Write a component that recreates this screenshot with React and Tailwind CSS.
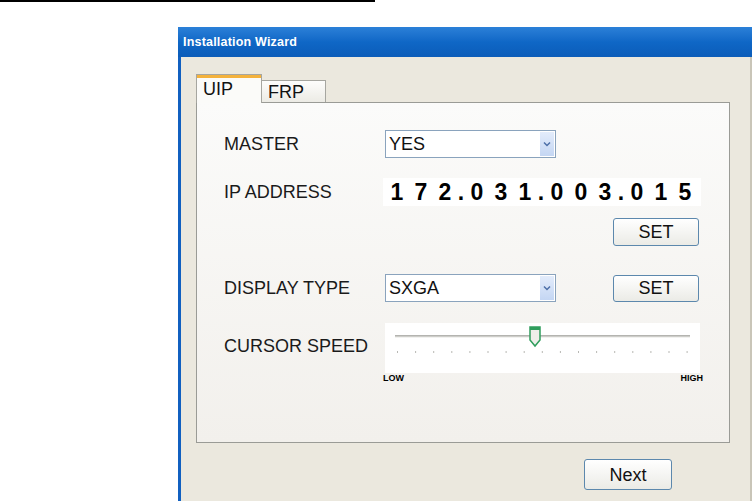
import React from 'react'

// slider tick positions, evenly spread over the track
const ticks = Array.from({ length: 17 }, (_, i) => 12 + i * 18.1)

const ipChars = '172.031.003.015'.split('')

const Dropdown = ({ value }) => {
    return (
        <div className="flex h-[28px] w-[171px] items-stretch border border-[#8aa3bd] bg-white">
            <div className="flex flex-1 items-center pl-[3px] text-[18px] leading-none text-[#111]">{value}</div>
            <div className="m-[1px] flex w-[14px] items-center justify-center bg-gradient-to-b from-[#e3ecfb] to-[#c4d6f3]">
                <svg width="8" height="6" viewBox="0 0 8 6">
                    <path d="M1 1.5 L4 4.5 L7 1.5" fill="none" stroke="#4d6fa8" strokeWidth="1.5" />
                </svg>
            </div>
        </div>
    )
}

const XpButton = ({ label, className }) => {
    return (
        <button
            className={
                'flex items-center justify-center rounded-[3px] border border-[#5c88ad] bg-gradient-to-b from-[#ffffff] to-[#ebebe6] text-[18px] leading-none text-[#111] ' +
                className
            }
        >
            {label}
        </button>
    )
}

const App = () => {
    return (
        <div
            className="relative h-[501px] w-[754px] overflow-hidden bg-white"
            style={{ fontFamily: '"Liberation Sans", Arial, sans-serif' }}
        >
            <div className="h-[2px] w-[375px] bg-black" />

            {/* window */}
            <div className="ml-[178px] mt-[25px] flex h-[474px] w-[574px] flex-col">
                <div className="flex h-[30px] items-center bg-gradient-to-b from-[#2b80d8] via-[#0f67c6] to-[#0b5cb9] pl-[5px]">
                    <span className="text-[12.5px] font-bold tracking-[0.2px] text-white">Installation Wizard</span>
                </div>

                <div className="flex flex-1 flex-col border-l-[3px] border-r-[2px] border-l-[#1160c0] border-r-[#c9c5b8] bg-[#ebe8de] pl-[15px] pt-[17px]">
                    {/* tabs */}
                    <div className="flex h-[28px] items-end">
                        <div className="relative z-10 -mb-px flex h-[29px] w-[66px] flex-col border border-b-0 border-[#a6a6a0] bg-[#fbfbf9]">
                            <div className="h-[3px] bg-[#f4b23c]" />
                            <div className="pl-[6px] pt-[2px] text-[18px] leading-none text-[#111]">UIP</div>
                        </div>
                        <div className="flex h-[22px] w-[64px] items-start border border-b-0 border-l-0 border-[#a6a6a0] bg-gradient-to-b from-[#fdfdfc] to-[#ecebe5] pl-[6px] pt-[2px] text-[18px] leading-none text-[#111]">
                            FRP
                        </div>
                    </div>

                    {/* panel */}
                    <div className="flex h-[341px] w-[534px] flex-col border border-[#9a9b96] bg-gradient-to-b from-[#fbfbfa] to-[#f2f0ec] pl-[27px] pt-[27px] text-[#1a1a1a]">
                        <div className="flex h-[28px] items-center">
                            <div className="w-[161px] text-[18px]">MASTER</div>
                            <Dropdown value="YES" />
                        </div>

                        <div className="mt-[20px] flex h-[28px] items-center">
                            <div className="w-[159px] text-[18px]">IP ADDRESS</div>
                            <div className="flex h-[28px] w-[318px] items-center bg-white pl-[2px]">
                                {ipChars.map((c, i) => (
                                    <span
                                        key={i}
                                        className={
                                            c === '.'
                                                ? 'w-[8px] text-center text-[23px] font-bold leading-none text-black'
                                                : 'w-[24px] text-center text-[23px] font-bold leading-none text-black'
                                        }
                                    >
                                        {c}
                                    </span>
                                ))}
                            </div>
                        </div>

                        <div className="mt-[12px] flex">
                            <XpButton label="SET" className="ml-[389px] h-[28px] w-[86px]" />
                        </div>

                        <div className="mt-[28px] flex h-[28px] items-center">
                            <div className="w-[161px] text-[18px]">DISPLAY TYPE</div>
                            <Dropdown value="SXGA" />
                            <XpButton label="SET" className="ml-[57px] h-[27px] w-[86px]" />
                        </div>

                        <div className="mt-[21px] flex">
                            <div className="w-[161px] pt-[10px] text-[18px]">CURSOR SPEED</div>
                            <div className="flex flex-col">
                                <div className="h-[50px] w-[315px] bg-white">
                                    <svg width="315" height="50" viewBox="0 0 315 50">
                                        <line x1="10" y1="13" x2="305" y2="13" stroke="#b4b4b0" strokeWidth="2" />
                                        <line x1="10" y1="14" x2="305" y2="14" stroke="#e6e6e2" strokeWidth="1" />
                                        {ticks.map((x, i) => (
                                            <rect key={i} x={x} y="28" width="1" height="2" fill="#b8b8b4" />
                                        ))}
                                        <path
                                            d="M145 4 L155 4 L155 17 L150 23 L145 17 Z"
                                            fill="#eeeeea"
                                            stroke="#2f9d5c"
                                            strokeWidth="1.5"
                                        />
                                        <rect x="145" y="4" width="10" height="3" fill="#2f9d5c" />
                                    </svg>
                                </div>
                                <div className="flex justify-between pt-[1px] text-[9px] font-bold leading-none text-black">
                                    <span className="-ml-[2px]">LOW</span>
                                    <span className="-mr-[3px]">HIGH</span>
                                </div>
                            </div>
                        </div>
                    </div>

                    <div className="mt-[16px] flex">
                        <XpButton label="Next" className="ml-[388px] h-[31px] w-[88px]" />
                    </div>
                </div>
            </div>
        </div>
    )
}

export default App
